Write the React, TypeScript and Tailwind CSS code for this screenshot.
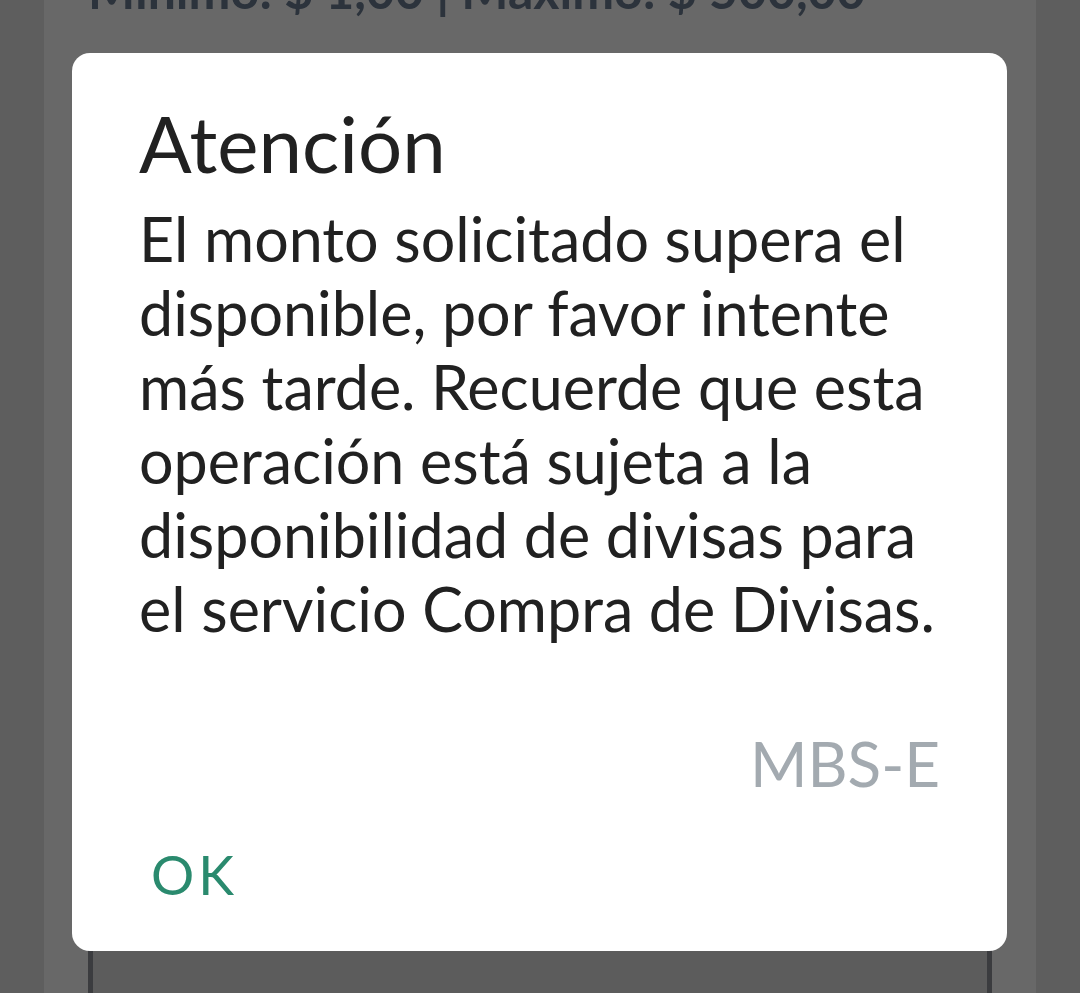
export default function App() {
  return (
    <div
      className="relative h-[993px] w-[1080px] overflow-hidden bg-[#5e5e5e]"
      style={{ fontFamily: "Lato, 'Noto Sans', sans-serif" }}
    >
      {/* page behind the dim overlay */}
      <div className="mx-[44px] flex h-full flex-col bg-[#686868] px-[44px]">
        <p className="-mt-[38px] text-[50px] font-bold leading-[56px] text-[#2c333c]">
          Mínimo: $ 1,00 | Máximo: $ 500,00
        </p>
        <p className="mt-[26px] text-[50px] font-bold leading-[56px] text-[#2c333c]">
          Equivalente a Dólares
        </p>
        <div className="mt-[826px] h-[120px] shrink-0 rounded-[18px] border-[5px] border-[#3b3c3f] bg-[#5c5c5c]" />
      </div>

      {/* dialog */}
      <div className="absolute left-[72px] top-[53px] flex h-[898px] w-[935px] flex-col rounded-[18px] bg-white px-[67px]">
        <h2 className="mt-[42px] text-[78px] leading-[96px] text-[#212121]">Atención</h2>
        <p className="mt-[11px] text-[61px] leading-[74px] text-[#212121]">
          El monto solicitado supera el disponible, por favor intente más tarde. Recuerde que esta
          operación está sujeta a la disponibilidad de divisas para el servicio Compra de Divisas.
        </p>
        <p className="mt-[80px] text-right text-[62px] leading-[74px] text-[#a3aab0]">MBS-E</p>
        <div className="mt-[40px]">
          <button className="px-[12px] text-[54px] leading-[70px] tracking-[4px] text-[#2a8a6e]">OK</button>
        </div>
      </div>
    </div>
  );
}
